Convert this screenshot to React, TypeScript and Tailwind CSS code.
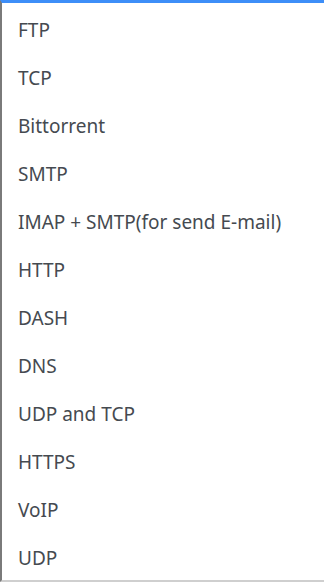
const protocols = [
  'FTP',
  'TCP',
  'Bittorrent',
  'SMTP',
  'IMAP + SMTP(for send E-mail)',
  'HTTP',
  'DASH',
  'DNS',
  'UDP and TCP',
  'HTTPS',
  'VoIP',
  'UDP',
];

export default function App() {
  return (
    <div
      className="h-[582px] w-[324px] overflow-hidden bg-white border-t-[3px] border-t-[#3d8ef8] border-l-2 border-l-[#7a7a7a] border-b-2 border-b-[#cfcfcf]"
      style={{ fontFamily: '"Noto Sans", "Open Sans", sans-serif' }}
    >
      <ul className="pt-[3px]">
        {protocols.map((p) => (
          <li
            key={p}
            className="h-12 flex items-center pl-4 text-[19px] text-[#454a50] cursor-pointer hover:bg-gray-100"
          >
            {p}
          </li>
        ))}
      </ul>
    </div>
  );
}
